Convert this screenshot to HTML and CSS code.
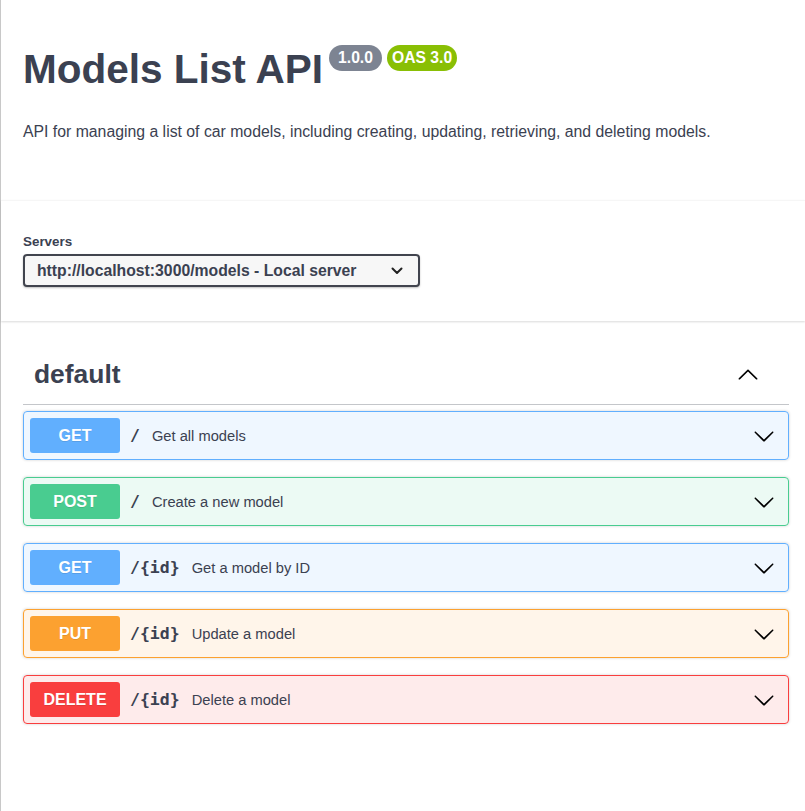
FILE: index.html
```html
<!DOCTYPE html>
<html lang="en">
<head>
<meta charset="utf-8">
<title>Models List API</title>
<link rel="stylesheet" href="styles.css">
</head>
<body>
<div class="page">
  <section class="info">
    <h2 class="title">
      <span class="title-text">Models List API</span>
      <span class="badge version">1.0.0</span>
      <span class="badge oas">OAS 3.0</span>
    </h2>
    <p class="desc">API for managing a list of car models, including creating, updating, retrieving, and deleting models.</p>
  </section>

  <section class="schemes">
    <div class="servers">
      <span class="servers-label">Servers</span>
      <div class="select">
        <span class="select-text">http://localhost:3000/models - Local server</span>
        <svg class="select-arrow" width="12" height="8" viewBox="0 0 12 8"><path d="M1.5 1.5 L6 6 L10.5 1.5" fill="none" stroke="#222" stroke-width="2" stroke-linecap="round" stroke-linejoin="round"/></svg>
      </div>
    </div>
  </section>

  <section class="tag-section">
    <h3 class="tag">
      <span class="tag-name">default</span>
      <svg class="tag-arrow" width="22" height="22" viewBox="0 0 20 20"><path d="M17.418 14.908c.272.268.709.268.979 0s.271-.701 0-.969l-7.908-7.83c-.27-.268-.707-.268-.979 0l-7.908 7.83c-.27.268-.27.701 0 .969.271.268.709.268.979 0L10 7.767l7.418 7.141z"/></svg>
    </h3>

    <div class="ops">
      <div class="op op-get">
        <span class="method">GET</span>
        <span class="path">/</span>
        <span class="summary">Get all models</span>
        <svg class="op-arrow" width="22" height="22" viewBox="0 0 20 20"><path d="M17.418 6.109c.272-.268.709-.268.979 0s.271.701 0 .969l-7.908 7.83c-.27.268-.707.268-.979 0l-7.908-7.83c-.27-.268-.27-.701 0-.969.271-.268.709-.268.979 0L10 13.25l7.418-7.141z"/></svg>
      </div>
      <div class="op op-post">
        <span class="method">POST</span>
        <span class="path">/</span>
        <span class="summary">Create a new model</span>
        <svg class="op-arrow" width="22" height="22" viewBox="0 0 20 20"><path d="M17.418 6.109c.272-.268.709-.268.979 0s.271.701 0 .969l-7.908 7.83c-.27.268-.707.268-.979 0l-7.908-7.83c-.27-.268-.27-.701 0-.969.271-.268.709-.268.979 0L10 13.25l7.418-7.141z"/></svg>
      </div>
      <div class="op op-get">
        <span class="method">GET</span>
        <span class="path">/{id}</span>
        <span class="summary">Get a model by ID</span>
        <svg class="op-arrow" width="22" height="22" viewBox="0 0 20 20"><path d="M17.418 6.109c.272-.268.709-.268.979 0s.271.701 0 .969l-7.908 7.83c-.27.268-.707.268-.979 0l-7.908-7.83c-.27-.268-.27-.701 0-.969.271-.268.709-.268.979 0L10 13.25l7.418-7.141z"/></svg>
      </div>
      <div class="op op-put">
        <span class="method">PUT</span>
        <span class="path">/{id}</span>
        <span class="summary">Update a model</span>
        <svg class="op-arrow" width="22" height="22" viewBox="0 0 20 20"><path d="M17.418 6.109c.272-.268.709-.268.979 0s.271.701 0 .969l-7.908 7.83c-.27.268-.707.268-.979 0l-7.908-7.83c-.27-.268-.27-.701 0-.969.271-.268.709-.268.979 0L10 13.25l7.418-7.141z"/></svg>
      </div>
      <div class="op op-delete">
        <span class="method">DELETE</span>
        <span class="path">/{id}</span>
        <span class="summary">Delete a model</span>
        <svg class="op-arrow" width="22" height="22" viewBox="0 0 20 20"><path d="M17.418 6.109c.272-.268.709-.268.979 0s.271.701 0 .969l-7.908 7.83c-.27.268-.707.268-.979 0l-7.908-7.83c-.27-.268-.27-.701 0-.969.271-.268.709-.268.979 0L10 13.25l7.418-7.141z"/></svg>
      </div>
    </div>
  </section>
</div>
</body>
</html>
```

FILE: styles.css
```css
* { box-sizing: border-box; }

html, body {
  margin: 0;
  padding: 0;
  background: #fff;
}

body {
  font-family: "Liberation Sans", Arial, sans-serif;
  color: #3b4151;
}

.page {
  min-height: 811px;
  border-left: 1px solid #c8c8c8;
}

/* ---------- info ---------- */
.info {
  padding: 45px 16px 0 22px;
}

.title {
  display: flex;
  align-items: flex-start;
  margin: 0;
  font-size: 40.5px;
  line-height: 48px;
  font-weight: 700;
  color: #3b4151;
}

.title-text {
  margin-right: 6px;
}

.badge {
  height: 26px;
  line-height: 26px;
  border-radius: 57px;
  color: #fff;
  font-size: 15.7px;
  font-weight: 700;
}

.badge.version {
  background: #7d8492;
  padding: 0 9px;
}

.badge.oas {
  background: #89bf04;
  padding: 0 5px;
  margin-left: 5px;
}

.desc {
  margin: 28px 0 0;
  font-size: 15.8px;
  line-height: 22px;
  color: #3b4151;
}

/* ---------- servers ---------- */
.schemes {
  margin-top: 57px;
  background: #fff;
  border-top: 1px solid #f6f6f6;
  box-shadow: 0 1px 2px 0 rgba(0, 0, 0, 0.15);
  padding: 33px 16px 34px 22px;
}

.servers {
  display: flex;
  flex-direction: column;
  align-items: flex-start;
}

.servers-label {
  font-size: 13.4px;
  line-height: 16px;
  font-weight: 700;
  color: #3b4151;
}

.select {
  margin-top: 4px;
  width: 397px;
  height: 33px;
  display: flex;
  align-items: center;
  padding: 0 15px 0 12px;
  border: 2px solid #41444e;
  border-radius: 4px;
  background: #f7f7f7;
  box-shadow: 0 1px 2px 0 rgba(0, 0, 0, 0.25);
  font-size: 15.75px;
  font-weight: 700;
  color: #3b4151;
}

.select-text {
  flex: 1;
  white-space: nowrap;
}

.select-arrow {
  display: block;
}

/* ---------- tag ---------- */
.tag-section {
  padding: 26px 16px 0 22px;
}

.tag {
  display: flex;
  align-items: center;
  margin: 0 0 6px;
  padding: 11px 30px 14px 11px;
  border-bottom: 1px solid rgba(59, 65, 81, 0.3);
  font-size: 26.4px;
  line-height: 32px;
  font-weight: 700;
  color: #3b4151;
}

.tag-name {
  flex: 1;
}

.tag-arrow {
  display: block;
  fill: #000;
}

/* ---------- operations ---------- */
.ops {
  display: flex;
  flex-direction: column;
  gap: 17px;
}

.op {
  display: flex;
  align-items: center;
  height: 49px;
  padding: 0 13px 0 6px;
  border: 1px solid;
  border-radius: 4px;
  box-shadow: 0 0 3px rgba(0, 0, 0, 0.19);
}

.method {
  width: 90px;
  height: 35px;
  line-height: 35px;
  text-align: center;
  border-radius: 3px;
  color: #fff;
  font-size: 16px;
  font-weight: 700;
  text-shadow: 0 1px 0 rgba(0, 0, 0, 0.1);
}

.path {
  padding-left: 10px;
  font-family: "DejaVu Sans Mono", "Liberation Mono", monospace;
  font-size: 16.5px;
  font-weight: 700;
  color: #3b4151;
}

.summary {
  flex: 1;
  padding-left: 12px;
  font-size: 14.7px;
  color: #3b4151;
}

.op-arrow {
  display: block;
  fill: #000;
}

.op-get { background: rgba(97, 175, 254, 0.1); border-color: #61affe; }
.op-get .method { background: #61affe; }

.op-post { background: rgba(73, 204, 144, 0.1); border-color: #49cc90; }
.op-post .method { background: #49cc90; }

.op-put { background: rgba(252, 161, 48, 0.1); border-color: #fca130; }
.op-put .method { background: #fca130; }

.op-delete { background: rgba(249, 62, 62, 0.1); border-color: #f93e3e; }
.op-delete .method { background: #f93e3e; }
```
